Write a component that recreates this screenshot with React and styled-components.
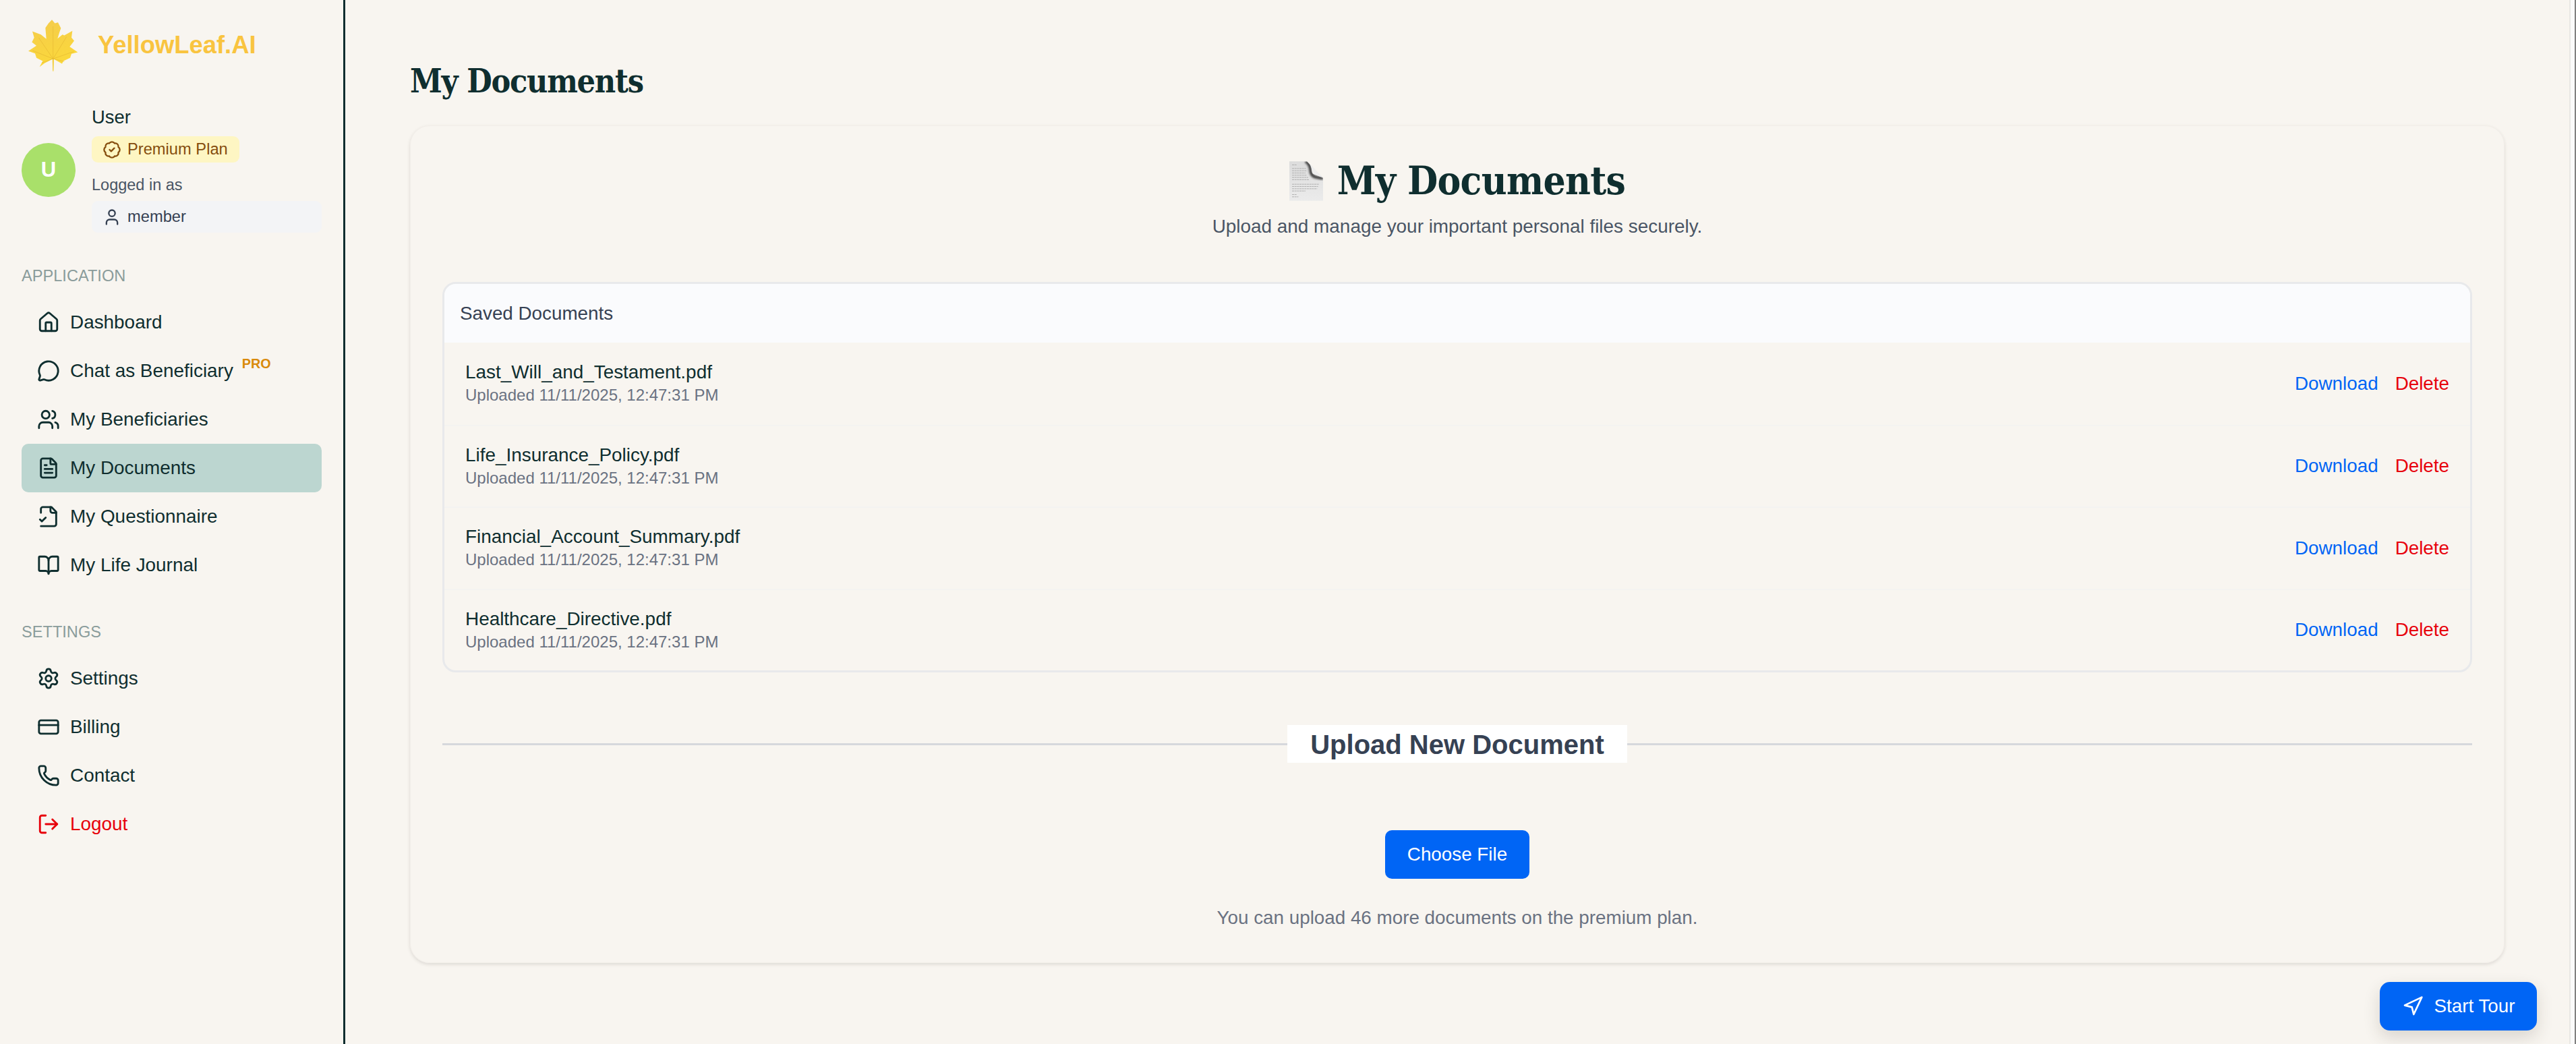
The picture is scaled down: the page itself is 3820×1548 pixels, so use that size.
import React from 'react'
import styled, { createGlobalStyle } from 'styled-components'
import {
  House, MessageCircle, Users, FileText, BookOpen,
  Settings, CreditCard, Phone, LogOut, BadgeCheck, User, Navigation,
} from 'lucide-react'

const GlobalStyle = createGlobalStyle`
  html, body { margin: 0; padding: 0; height: 100%; }
  body {
    background: #f8f5f0;
    font-family: "Liberation Sans", Arial, sans-serif;
    color: #0f2e2f;
    overflow: hidden;
  }
  * { box-sizing: border-box; }
`

const Shell = styled.div`
  display: flex;
  width: 3820px;
  height: 1548px;
  position: relative;
`

const Sidebar = styled.aside`
  width: 512px;
  flex-shrink: 0;
  border-right: 3px solid #0f2e2f;
  padding: 28px 32px 0;
  display: flex;
  flex-direction: column;
`

const Brand = styled.div`
  display: flex;
  align-items: center;
  height: 78px;
  padding-left: 10px;
  gap: 29px;
`

const BrandName = styled.span`
  font-size: 36.4px;
  font-weight: 700;
  color: #f9c440;
`

const Picture = styled.svg`
  flex-shrink: 0;
  filter: blur(0.5px);
`

const UserBlock = styled.div`
  display: flex;
  align-items: center;
  gap: 24px;
  margin-top: 52px;
`

const Avatar = styled.div`
  width: 80px;
  height: 80px;
  border-radius: 50%;
  background: #a9e06a;
  color: #fff;
  font-weight: 700;
  font-size: 31px;
  display: flex;
  align-items: center;
  justify-content: center;
  flex-shrink: 0;
`

const UserInfo = styled.div`
  flex: 1;
  display: flex;
  flex-direction: column;
  align-items: flex-start;
`

const UserName = styled.div`
  font-size: 27.4px;
  line-height: 32px;
  margin-bottom: 12px;
`

const PlanBadge = styled.div`
  display: flex;
  align-items: center;
  gap: 9px;
  height: 39px;
  padding: 0 17px 0 16px;
  border-radius: 9px;
  background: #fef6c3;
  color: #854d0e;
  font-size: 23.7px;
`

const LoggedIn = styled.div`
  font-size: 23.5px;
  line-height: 34px;
  margin-top: 16px;
  margin-bottom: 7px;
  color: #4a5565;
`

const RolePill = styled.div`
  display: flex;
  align-items: center;
  gap: 9px;
  width: 100%;
  height: 47px;
  padding: 0 16px;
  border-radius: 9px;
  background: #f3f4f6;
  color: #364153;
  font-size: 23.7px;
`

const SectionLabel = styled.div`
  font-size: 23.6px;
  line-height: 28px;
  color: #8a9c9b;
  margin-top: ${(p) => p.$top}px;
  margin-bottom: 19px;
`

const NavItem = styled.a`
  display: flex;
  align-items: center;
  gap: 15px;
  height: 72px;
  padding-left: 23px;
  border-radius: 10px;
  font-size: 27.9px;
  color: ${(p) => (p.$danger ? '#e7000b' : '#0f2e2f')};
  background: ${(p) => (p.$active ? '#bcd6d0' : 'transparent')};
`

const ProTag = styled.sup`
  font-size: 19.8px;
  font-weight: 700;
  color: #d98a0b;
  align-self: flex-start;
  margin: 13px 0 0 -2px;
  line-height: 24px;
`

const Main = styled.main`
  flex: 1;
  padding: 92px 96px 0;
`

const PageTitle = styled.h1`
  margin: 0 0 38px;
  font-family: "DejaVu Serif", serif;
  font-stretch: condensed;
  font-size: 48px;
  letter-spacing: -1.25px;
  line-height: 56px;
  font-weight: 700;
  color: #0f2e2f;
`

const Card = styled.section`
  height: 1242px;
  padding: 0 47px;
  border: 1px solid #f2eee9;
  border-radius: 29px;
  box-shadow: 0 2px 5px rgba(60, 50, 40, 0.14);
`

const Hero = styled.div`
  height: 231px;
  padding-top: 46px;
  text-align: center;
`

const HeroTitle = styled.h2`
  margin: 0;
  display: flex;
  justify-content: center;
  align-items: center;
  gap: 21px;
  font-family: "DejaVu Serif", serif;
  font-stretch: condensed;
  font-size: 58px;
  letter-spacing: -0.7px;
  line-height: 70px;
  font-weight: 700;
  color: #0f2e2f;
`

const HeroText = styled.p`
  margin: 15px 0 0;
  font-size: 27.9px;
  line-height: 36px;
  color: #4a5565;
`

const DocList = styled.div`
  border: 3px solid #e8e9eb;
  border-radius: 20px;
  overflow: hidden;
`

const DocHeader = styled.div`
  height: 87px;
  display: flex;
  align-items: center;
  padding-left: 23px;
  background: #fafbfd;
  font-size: 27.8px;
  color: #364153;
`

const DocRow = styled.div`
  height: 121.5px;
  display: flex;
  align-items: center;
  justify-content: space-between;
  padding: 0 31px;
  & + & { border-top: 2px solid #f4f3f1; }
`

const DocName = styled.div`
  font-size: 27.9px;
  line-height: 34px;
  color: #0f2e2f;
`

const DocDate = styled.div`
  font-size: 24px;
  line-height: 33px;
  color: #6a7282;
`

const DocActions = styled.div`
  display: flex;
  gap: 25px;
  font-size: 27.8px;
`

const TextAction = styled.a`
  color: ${(p) => (p.$danger ? '#e7000b' : '#0065f5')};
`

const Divider = styled.div`
  display: flex;
  align-items: center;
  margin-top: 78px;
`

const DividerLine = styled.div`
  flex: 1;
  height: 3px;
  background: #d6d8dc;
`

const DividerLabel = styled.div`
  height: 56px;
  padding: 2px 34px 0;
  display: flex;
  align-items: center;
  background: #fff;
  font-size: 40px;
  font-weight: 700;
  color: #364153;
`

const UploadArea = styled.div`
  display: flex;
  flex-direction: column;
  align-items: center;
  margin-top: 100px;
`

const PrimaryButton = styled.button`
  height: 72px;
  width: 214px;
  border: 0;
  border-radius: 10px;
  background: #0065f5;
  color: #fff;
  font: 27.8px "Liberation Sans", Arial, sans-serif;
`

const Note = styled.p`
  margin: 40px 0 0;
  font-size: 27.8px;
  line-height: 36px;
  color: #6a7282;
`

const TourButton = styled.button`
  position: absolute;
  left: 3529px;
  top: 1456px;
  width: 233px;
  height: 72px;
  border: 0;
  border-radius: 15px;
  background: #0065f5;
  color: #fff;
  font: 27.8px "Liberation Sans", Arial, sans-serif;
  display: flex;
  align-items: center;
  justify-content: center;
  gap: 16px;
  box-shadow: 0 10px 24px rgba(60, 50, 40, 0.16);
`

const Gutter = styled.div`
  width: 10px;
  flex-shrink: 0;
  background: linear-gradient(to right, #e9e7e4 0 2px, #fafafa 2px 8px, #808080 8px);
`

const icon = { size: 34, strokeWidth: 2 }

const QuestionnaireIcon = () => (
  <svg width="34" height="34" viewBox="0 0 24 24" fill="none" stroke="currentColor" strokeWidth="2" strokeLinecap="round" strokeLinejoin="round">
    <path d="M4 22h14a2 2 0 0 0 2-2V7l-5-5H6a2 2 0 0 0-2 2v4" />
    <path d="M14 2v4a2 2 0 0 0 2 2h4" />
    <path d="m3 15 2 2 4-4" />
  </svg>
)

const LeafLogo = () => (
  <Picture width="74" height="77" viewBox="20 20 222 230">
    <defs>
      <linearGradient id="leaf" x1="0" y1="0" x2="0.3" y2="1">
        <stop offset="0" stopColor="#f4cb4c" />
        <stop offset="1" stopColor="#fbd93a" />
      </linearGradient>
    </defs>
    <path
      fill="url(#leaf)"
      d="M125 20 L138 36 L152 32 L165 58 L158 78 L150 104 L172 86 L180 90 L216 70 L212 100 L224 114 L204 140 L240 165 L212 172 L206 190 L176 204 L170 216 L134 196 L132 250 L129 250 L127 196 L92 214 L70 230 L84 204 L56 190 L50 170 L20 160 L56 136 L36 120 L46 100 L38 72 L76 86 L100 106 L96 56 L110 36 Z"
    />
    <path
      fill="none"
      stroke="#e0b22f"
      strokeWidth="1.6"
      d="M130 246 L130 50 M130 194 L190 96 M130 194 L66 100 M130 194 L222 162 M130 194 L40 158 M130 194 L180 206 M130 194 L80 212"
    />
  </Picture>
)

const PageEmoji = () => (
  <Picture width="50" height="59" viewBox="0 0 150 176">
    <defs>
      <linearGradient id="paper" x1="0" y1="0" x2="0" y2="1">
        <stop offset="0" stopColor="#dcdcdc" />
        <stop offset="1" stopColor="#ebebeb" />
      </linearGradient>
      <filter id="soft"><feGaussianBlur stdDeviation="5" /></filter>
      <clipPath id="sheet"><path d="M0 0 H78 L150 74 V176 H0 Z" /></clipPath>
    </defs>
    <path fill="url(#paper)" d="M0 0 H78 L150 74 V176 H0 Z" />
    <g clipPath="url(#sheet)">
      <path
        fill="none"
        stroke="#3f3f3f"
        strokeWidth="13"
        filter="url(#soft)"
        d="M72 0 Q92 12 94 38 Q95 68 125 72 L150 76"
      />
    </g>
    <path fill="#eeeeee" d="M82 2 Q98 18 100 44 Q101 58 116 60 L150 74 Z" />
    <path
      stroke="#a8a8a8"
      strokeWidth="2.6"
      strokeDasharray="9 2"
      d="M12 16 H34 M12 32 H74 M12 42 H78 M12 52 H72 M12 62 H78 M12 72 H84 M12 82 H88 M12 102 H132 M12 112 H128 M12 122 H124 M12 132 H72 M12 148 H32 M12 158 H40"
    />
  </Picture>
)

const documents = [
  'Last_Will_and_Testament.pdf',
  'Life_Insurance_Policy.pdf',
  'Financial_Account_Summary.pdf',
  'Healthcare_Directive.pdf',
]

export default function App() {
  return (
    <Shell>
      <GlobalStyle />
      <Sidebar>
        <Brand>
          <LeafLogo />
          <BrandName>YellowLeaf.AI</BrandName>
        </Brand>
        <UserBlock>
          <Avatar>U</Avatar>
          <UserInfo>
            <UserName>User</UserName>
            <PlanBadge><BadgeCheck size={28} strokeWidth={2} />Premium Plan</PlanBadge>
            <LoggedIn>Logged in as</LoggedIn>
            <RolePill><User size={28} strokeWidth={2} />member</RolePill>
          </UserInfo>
        </UserBlock>
        <SectionLabel $top={50}>APPLICATION</SectionLabel>
        <NavItem><House {...icon} />Dashboard</NavItem>
        <NavItem><MessageCircle {...icon} />Chat as Beneficiary<ProTag>PRO</ProTag></NavItem>
        <NavItem><Users {...icon} />My Beneficiaries</NavItem>
        <NavItem $active><FileText {...icon} />My Documents</NavItem>
        <NavItem><QuestionnaireIcon />My Questionnaire</NavItem>
        <NavItem><BookOpen {...icon} />My Life Journal</NavItem>
        <SectionLabel $top={49}>SETTINGS</SectionLabel>
        <NavItem><Settings {...icon} />Settings</NavItem>
        <NavItem><CreditCard {...icon} />Billing</NavItem>
        <NavItem><Phone {...icon} />Contact</NavItem>
        <NavItem $danger><LogOut {...icon} />Logout</NavItem>
      </Sidebar>
      <Main>
        <PageTitle>My Documents</PageTitle>
        <Card>
          <Hero>
            <HeroTitle><PageEmoji />My Documents</HeroTitle>
            <HeroText>Upload and manage your important personal files securely.</HeroText>
          </Hero>
          <DocList>
            <DocHeader>Saved Documents</DocHeader>
            {documents.map((name) => (
              <DocRow key={name}>
                <div>
                  <DocName>{name}</DocName>
                  <DocDate>Uploaded 11/11/2025, 12:47:31 PM</DocDate>
                </div>
                <DocActions>
                  <TextAction>Download</TextAction>
                  <TextAction $danger>Delete</TextAction>
                </DocActions>
              </DocRow>
            ))}
          </DocList>
          <Divider>
            <DividerLine />
            <DividerLabel>Upload New Document</DividerLabel>
            <DividerLine />
          </Divider>
          <UploadArea>
            <PrimaryButton>Choose File</PrimaryButton>
            <Note>You can upload 46 more documents on the premium plan.</Note>
          </UploadArea>
        </Card>
      </Main>
      <Gutter />
      <TourButton><Navigation size={32} strokeWidth={2} />Start Tour</TourButton>
    </Shell>
  )
}
